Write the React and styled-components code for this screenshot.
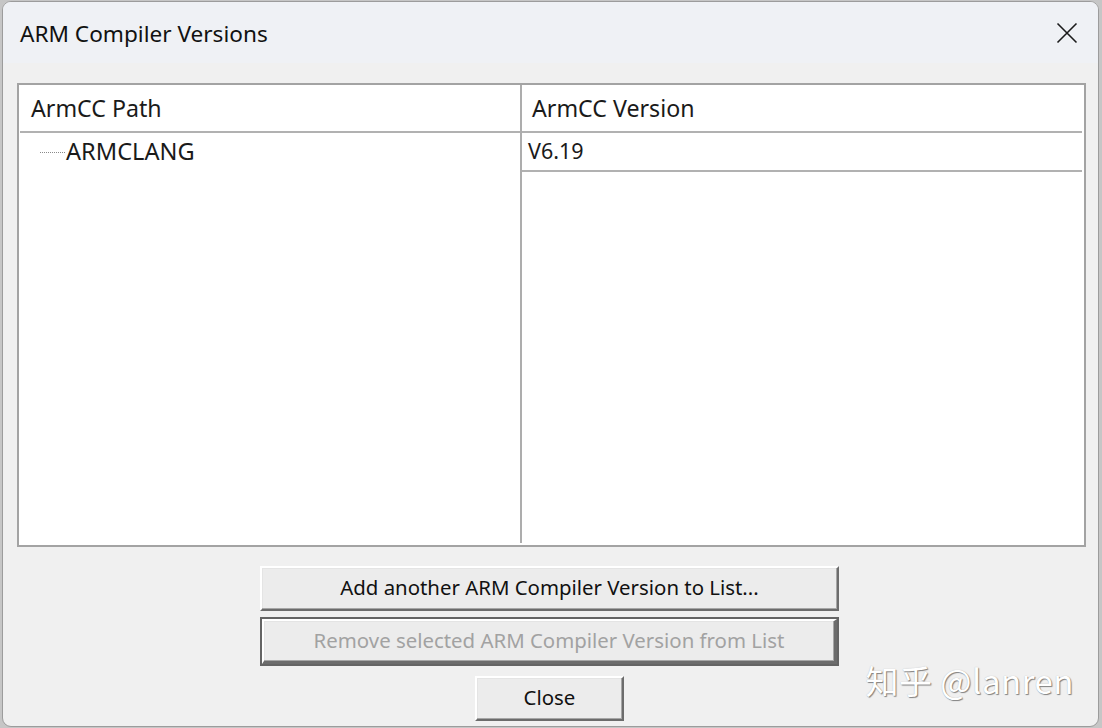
import React from "react";
import styled, { createGlobalStyle } from "styled-components";

const Global = createGlobalStyle`
  html, body { margin: 0; padding: 0; }
  body {
    background: #c6c6c6;
    width: 1102px;
    height: 728px;
    overflow: hidden;
    font-family: "Noto Sans", "Open Sans", sans-serif;
  }
`;

const Window = styled.div`
  position: relative;
  margin: 1px 0 0 2px;
  width: 1095px;
  height: 724px;
  border: 1px solid #9c9c9c;
  border-radius: 9px;
  background: #f0f0f0;
  overflow: hidden;
  display: flex;
  flex-direction: column;
`;

const TitleBar = styled.div`
  height: 61px;
  flex: none;
  background: #eff1f5;
  display: flex;
  align-items: center;
  justify-content: space-between;
  padding: 0 20px 0 17px;
  box-sizing: border-box;
`;

const Title = styled.div`
  font-family: "Noto Sans", sans-serif;
  font-size: 22.6px;
  color: #111;
  margin-top: 1px;
`;

const CloseIcon = styled.svg`
  width: 22px;
  height: 22px;
`;

const Body = styled.div`
  flex: 1;
  display: flex;
  flex-direction: column;
  padding: 20px 12px 0 14px;
`;

const ListBox = styled.div`
  height: 464px;
  box-sizing: border-box;
  border: 2px solid #a3a3a3;
  background: #fff;
  display: grid;
  grid-template-columns: 501px 2px 560px;
  padding: 0 0 2px 0;
`;

const Pane = styled.div`
  display: flex;
  flex-direction: column;
  padding-left: ${(p) => p.$inset}px;
`;

const Divider = styled.div`
  background: #adadad;
`;

const Header = styled.div`
  height: 46px;
  flex: none;
  display: flex;
  align-items: center;
  padding-left: ${(p) => p.$pad}px;
  border-bottom: 2px solid #b1b1b1;
  font-size: 23.2px;
  color: #1a1a1a;
  font-family: "Noto Sans", sans-serif;
`;

const Row = styled.div`
  height: 39px;
  box-sizing: border-box;
  display: flex;
  align-items: center;
  padding: 0 0 3px ${(p) => p.$pad}px;
  border-bottom: ${(p) => (p.$lined ? "2px solid #b1b1b1" : "none")};
  font-size: ${(p) => p.$size}px;
  color: #1a1a1a;
`;

const TreeLine = styled.span`
  width: 25px;
  height: 0;
  border-top: 1px dotted #8a8a8a;
  margin: 3px 1px 0 0;
`;

const Buttons = styled.div`
  display: flex;
  flex-direction: column;
  align-items: center;
  padding-top: 19px;
  gap: 6px;
  margin-right: 4px;
`;

const Button = styled.div`
  width: ${(p) => p.$w}px;
  height: 45px;
  box-sizing: border-box;
  display: flex;
  align-items: center;
  justify-content: center;
  padding-bottom: 3px;
  background: #ececec;
  font-family: "Noto Sans", sans-serif;
  font-size: 20.4px;
  color: ${(p) => (p.$disabled ? "#a2a2a2" : "#111")};
  border: 2px solid;
  border-color: #ffffff #6c6c6c #6c6c6c #ffffff;
  box-shadow: inset -1px -1px 0 #a6a6a6, inset 1px 1px 0 #e4e4e4;
  ${(p) =>
    p.$focused &&
    `
    outline: 2px solid #646464;
    outline-offset: 0;
    border-width: 2px 3px 3px 2px;
  `}
  margin-top: ${(p) => p.$mt || 0}px;
`;

const Watermark = styled.div`
  position: absolute;
  right: 24px;
  bottom: 22px;
  font-family: "Noto Sans CJK SC", "Noto Sans", sans-serif;
  font-size: 33px;
  color: #ffffff;
  text-shadow: 1px 1px 1px rgba(0, 0, 0, 0.45), 0 0 1px rgba(0, 0, 0, 0.25);
  letter-spacing: 0.5px;
`;

export default function App() {
  return (
    <>
      <Global />
      <Window>
        <TitleBar>
          <Title>ARM Compiler Versions</Title>
          <CloseIcon viewBox="0 0 22 22">
            <path d="M1.5 1.5 L20.5 20.5 M20.5 1.5 L1.5 20.5" stroke="#1b1b1b" strokeWidth="1.6" fill="none" />
          </CloseIcon>
        </TitleBar>
        <Body>
          <ListBox>
            <Pane $inset={1}>
              <Header $pad={11}>ArmCC Path</Header>
              <Row $pad={20} $size={23.6}>
                <TreeLine />
                ARMCLANG
              </Row>
            </Pane>
            <Divider />
            <Pane $inset={0}>
              <Header $pad={10}>ArmCC Version</Header>
              <Row $pad={6} $size={21.5} $lined>V6.19</Row>
            </Pane>
          </ListBox>
          <Buttons>
            <Button $w={579}>Add another ARM Compiler Version to List...</Button>
            <Button $w={575} $disabled $focused $mt={2}>
              Remove selected ARM Compiler Version from List
            </Button>
            <Button $w={149} $mt={6}>Close</Button>
          </Buttons>
        </Body>
        <Watermark>知乎 @lanren</Watermark>
      </Window>
    </>
  );
}
